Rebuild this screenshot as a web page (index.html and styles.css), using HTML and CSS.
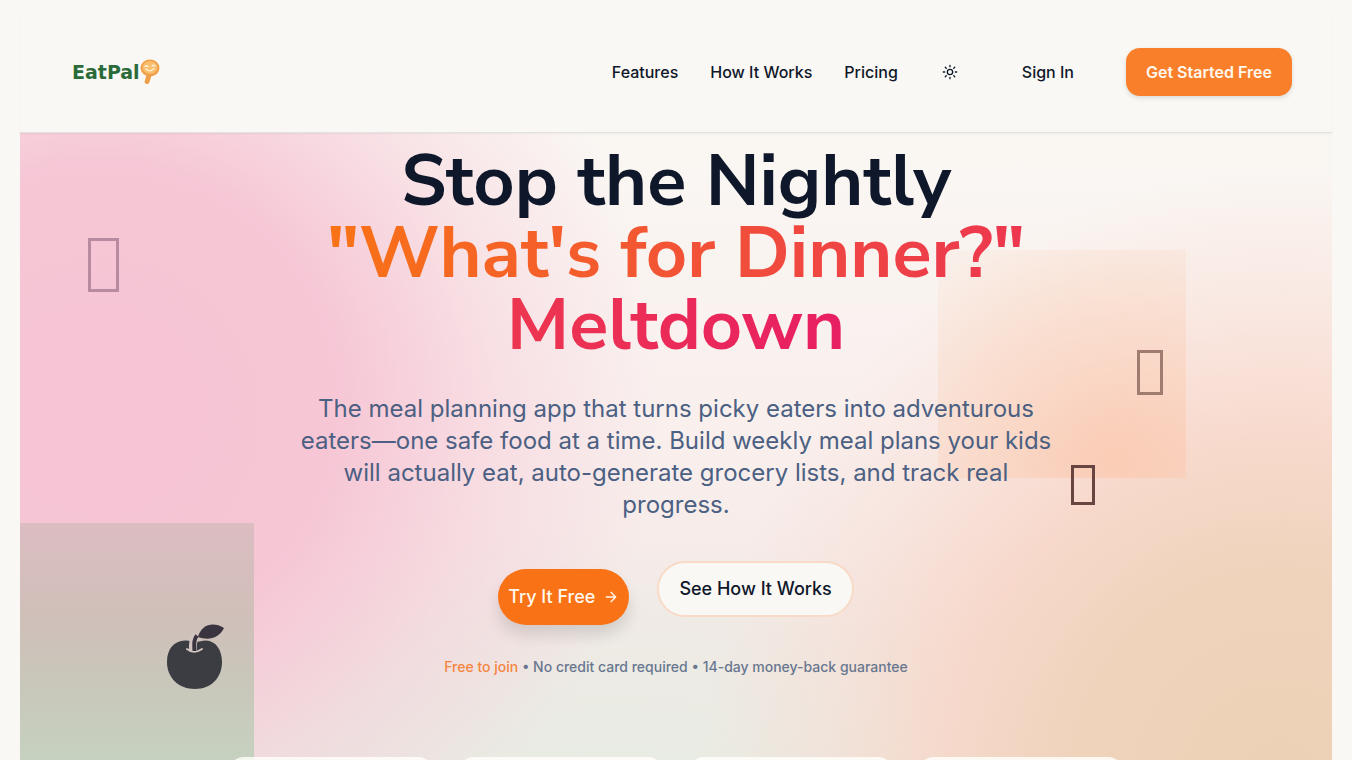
FILE: index.html
```html
<!DOCTYPE html>
<html lang="en">
<head>
  <meta charset="UTF-8">
  <meta name="viewport" content="width=device-width, initial-scale=1.0">
  <title>EatPal</title>
  <link rel="stylesheet" href="styles.css">
</head>
<body>
  <header class="header">
    <a class="logo" href="#" aria-label="EatPal home">
      <span>EatPal</span>
      <svg width="20" height="26" viewBox="0 0 20 26">
        <path d="M7 14 L4.500 23 Q5 25.500 7.500 25 Q9 25 9.500 23 L12 15 Z" fill="#f0a04b"/>
        <ellipse cx="10" cy="9" rx="9.500" ry="8.500" fill="#f0a04b"/>
        <ellipse cx="10" cy="8.500" rx="7.500" ry="6.500" fill="#f9bd6b"/>
        <path d="M5 7.500 Q6.500 6 8 7.500 M12 7 Q13.500 5.500 15 7 M6 10 Q10 14 14 9.500" fill="none" stroke="#fff3dc" stroke-width="1.300" stroke-linecap="round"/>
      </svg>
    </a>
    <nav class="nav">
      <a href="#features">Features</a>
      <a href="#how">How It Works</a>
      <a href="#pricing">Pricing</a>
      <button class="theme-toggle" aria-label="Toggle theme">
        <svg width="16" height="16" viewBox="0 0 24 24" fill="none" stroke="currentColor" stroke-width="2" stroke-linecap="round" stroke-linejoin="round">
          <circle cx="12" cy="12" r="4"/>
          <path d="M12 2v2M12 20v2M4.930 4.930l1.410 1.410M17.660 17.660l1.410 1.410M2 12h2M20 12h2M6.340 17.660l-1.410 1.410M19.070 4.930l-1.410 1.410"/>
        </svg>
      </button>
      <button class="sign-in">Sign In</button>
      <button class="get-started">Get Started Free</button>
    </nav>
  </header>

  <main class="hero">
    <div class="blob blob-green"></div>
    <div class="blob blob-orange"></div>
    <span class="float float-one"></span>
    <span class="float float-two"></span>
    <span class="float float-three"></span>
    <svg class="apple" width="60" height="68" viewBox="0 0 60 68">
      <path d="M20 17.500 C24 17 27 19 30 19 C34 19 37 17.500 41 17.500 C51 18 57 27 57 39 C57 55 46 66 30 66 C14 66 2 55 2 39 C2 26 9 18 20 17.500 Z" fill="#3b3d42"/>
      <path d="M28 28 C27.500 20 28 16 31 12" fill="none" stroke="#d2c4c0" stroke-width="8"/>
      <path d="M22 26 Q29 31.500 37 26" fill="none" stroke="#d2c4c0" stroke-width="2" stroke-linecap="round"/>
      <path d="M29.500 28 C29 20 29 16 32 12.500" fill="none" stroke="#3a3340" stroke-width="4"/>
      <path d="M33 14 C36 2 48 -2 59 5 C54 15 44 18 33 14 Z" fill="#3a3340"/>
    </svg>

    <h1>Stop the Nightly<br><span class="gradient-text">"What's for Dinner?" Meltdown</span></h1>
    <p class="lead">The meal planning app that turns picky eaters into adventurous eaters—one safe food at a time. Build weekly meal plans your kids will actually eat, auto-generate grocery lists, and track real progress.</p>
    <div class="actions">
      <button class="btn btn-primary">Try It Free
        <svg width="16" height="16" viewBox="0 0 24 24" fill="none" stroke="currentColor" stroke-width="2" stroke-linecap="round" stroke-linejoin="round"><path d="M5 12h14M12 5l7 7-7 7"/></svg>
      </button>
      <button class="btn btn-outline">See How It Works</button>
    </div>
    <p class="note"><span>Free to join</span> • No credit card required • 14-day money-back guarantee</p>
    <div class="cards">
      <div class="card"></div>
      <div class="card"></div>
      <div class="card"></div>
      <div class="card"></div>
    </div>
  </main>
</body>
</html>
```
FILE: styles.css
```css
:root {
  --bg: #f9f8f4;
  --ink: #0f172a;
  --muted: #4b6082;
  --orange: #f97316;
}

* {
  box-sizing: border-box;
}

body {
  margin: 0;
  padding: 12px 20px 0;
  background: var(--bg);
  color: var(--ink);
  font-family: Inter, sans-serif;
  font-size: 16px;
  line-height: 24px;
}

a {
  color: inherit;
  text-decoration: none;
}

button {
  border: none;
  background: none;
  color: inherit;
  font: inherit;
  font-weight: 500;
  cursor: pointer;
}

.header {
  position: relative;
  z-index: 1;
  display: flex;
  align-items: center;
  justify-content: space-between;
  height: 121px;
  padding: 0 40px 0 52px;
  border-bottom: 1px solid #e2e2e2;
  background: var(--bg);
  box-shadow: 0 1px 2px rgba(0, 0, 0, 0.05);
}

.logo {
  display: flex;
  align-items: center;
  color: #2a6b39;
  font-family: "DejaVu Sans", sans-serif;
  font-size: 19px;
  font-weight: bold;
}

.nav {
  display: flex;
  align-items: center;
  gap: 32px;
  font-weight: 500;
}

.theme-toggle {
  display: flex;
  align-items: center;
  justify-content: center;
  width: 40px;
  height: 40px;
  padding: 0;
}

.sign-in {
  padding: 12px 20px;
}

.get-started {
  padding: 12px 20px;
  border-radius: 14px;
  background: #f97f2b;
  color: #fff8ee;
  font-weight: 600;
  box-shadow: 0 2px 5px rgba(0, 0, 0, 0.12);
}

.hero {
  position: relative;
  overflow: hidden;
  padding: 12px 24px 64px;
  text-align: center;
  background:
    radial-gradient(560px 560px at 6% 270px, #f6c4d4 0%, rgba(246, 196, 212, 0.95) 42%, rgba(246, 196, 212, 0.4) 70%, transparent 100%),
    radial-gradient(580px 620px at 96% 660px, #edd1b6 0%, #efd3bb 35%, rgba(248, 211, 195, 0.75) 58%, rgba(249, 216, 204, 0.4) 78%, transparent 100%),
    radial-gradient(600px 300px at 45% 700px, #e6ede3 0%, rgba(233, 236, 228, 0.8) 40%, transparent 100%),
    linear-gradient(#faf7f3, #f9efed 300px, #f4e9e6 500px, #efe9e3 640px);
}

.blob {
  position: absolute;
}

.blob-green {
  top: 390px;
  left: 0;
  width: 234px;
  height: 300px;
  background: linear-gradient(#dcbdc2, #d0bfb9 90px, #c9c6ba 155px, #c6d1c0 235px);
}

.blob-orange {
  top: 117px;
  left: 70%;
  width: 248px;
  height: 228px;
  background: radial-gradient(260px 240px at 70% 90%, rgba(251, 196, 168, 0.65), rgba(250, 208, 184, 0.5) 50%, rgba(248, 224, 208, 0.25) 100%);
}

/* Floating outlines around the headline */
.float {
  position: absolute;
  border: 3px solid #b98ba0;
}

.float-one {
  top: 105px;
  left: 68px;
  width: 31px;
  height: 54px;
}

.float-two {
  top: 217px;
  right: 169px;
  width: 26px;
  height: 45px;
  border-color: #a07c70;
}

.float-three {
  top: 332px;
  right: 237px;
  width: 24px;
  height: 40px;
  border-color: #684540;
}

.apple {
  position: absolute;
  top: 490px;
  left: 145px;
}

h1 {
  position: relative;
  max-width: 896px;
  margin: 0 auto;
  font-family: "Nunito Sans", Lato, sans-serif;
  font-size: 72px;
  font-weight: 700;
  line-height: 72px;
}

.gradient-text {
  background: linear-gradient(90deg, #f97316, #ef4444, #e81e63);
  -webkit-background-clip: text;
  background-clip: text;
  color: transparent;
}

.lead {
  position: relative;
  max-width: 768px;
  margin: 32px auto 40px;
  color: var(--muted);
  font-size: 24px;
  line-height: 32px;
}

.actions {
  position: relative;
  display: flex;
  justify-content: center;
  gap: 28px;
  height: 64px;
}

.btn {
  display: flex;
  align-items: center;
  height: 56px;
  border-radius: 28px;
  font-size: 18px;
}

.btn-primary {
  align-self: flex-end;
  gap: 8px;
  padding: 0 10px;
  background: var(--orange);
  color: #fff8ee;
  box-shadow: 0 10px 15px rgba(0, 0, 0, 0.12);
}

.btn-outline {
  padding: 0 20px;
  border: 2px solid #f9dac6;
  background: var(--bg);
}

.note {
  position: relative;
  margin: 32px 0 80px;
  color: #68778f;
  font-size: 14px;
  font-weight: 500;
  line-height: 20px;
}

.note span {
  color: #f5853f;
}

.cards {
  position: relative;
  display: grid;
  grid-template-columns: repeat(4, 1fr);
  gap: 24px;
  max-width: 896px;
  margin: 0 auto;
}

.card {
  height: 120px;
  border-radius: 16px;
  background: rgba(255, 254, 250, 0.85);
}
```
